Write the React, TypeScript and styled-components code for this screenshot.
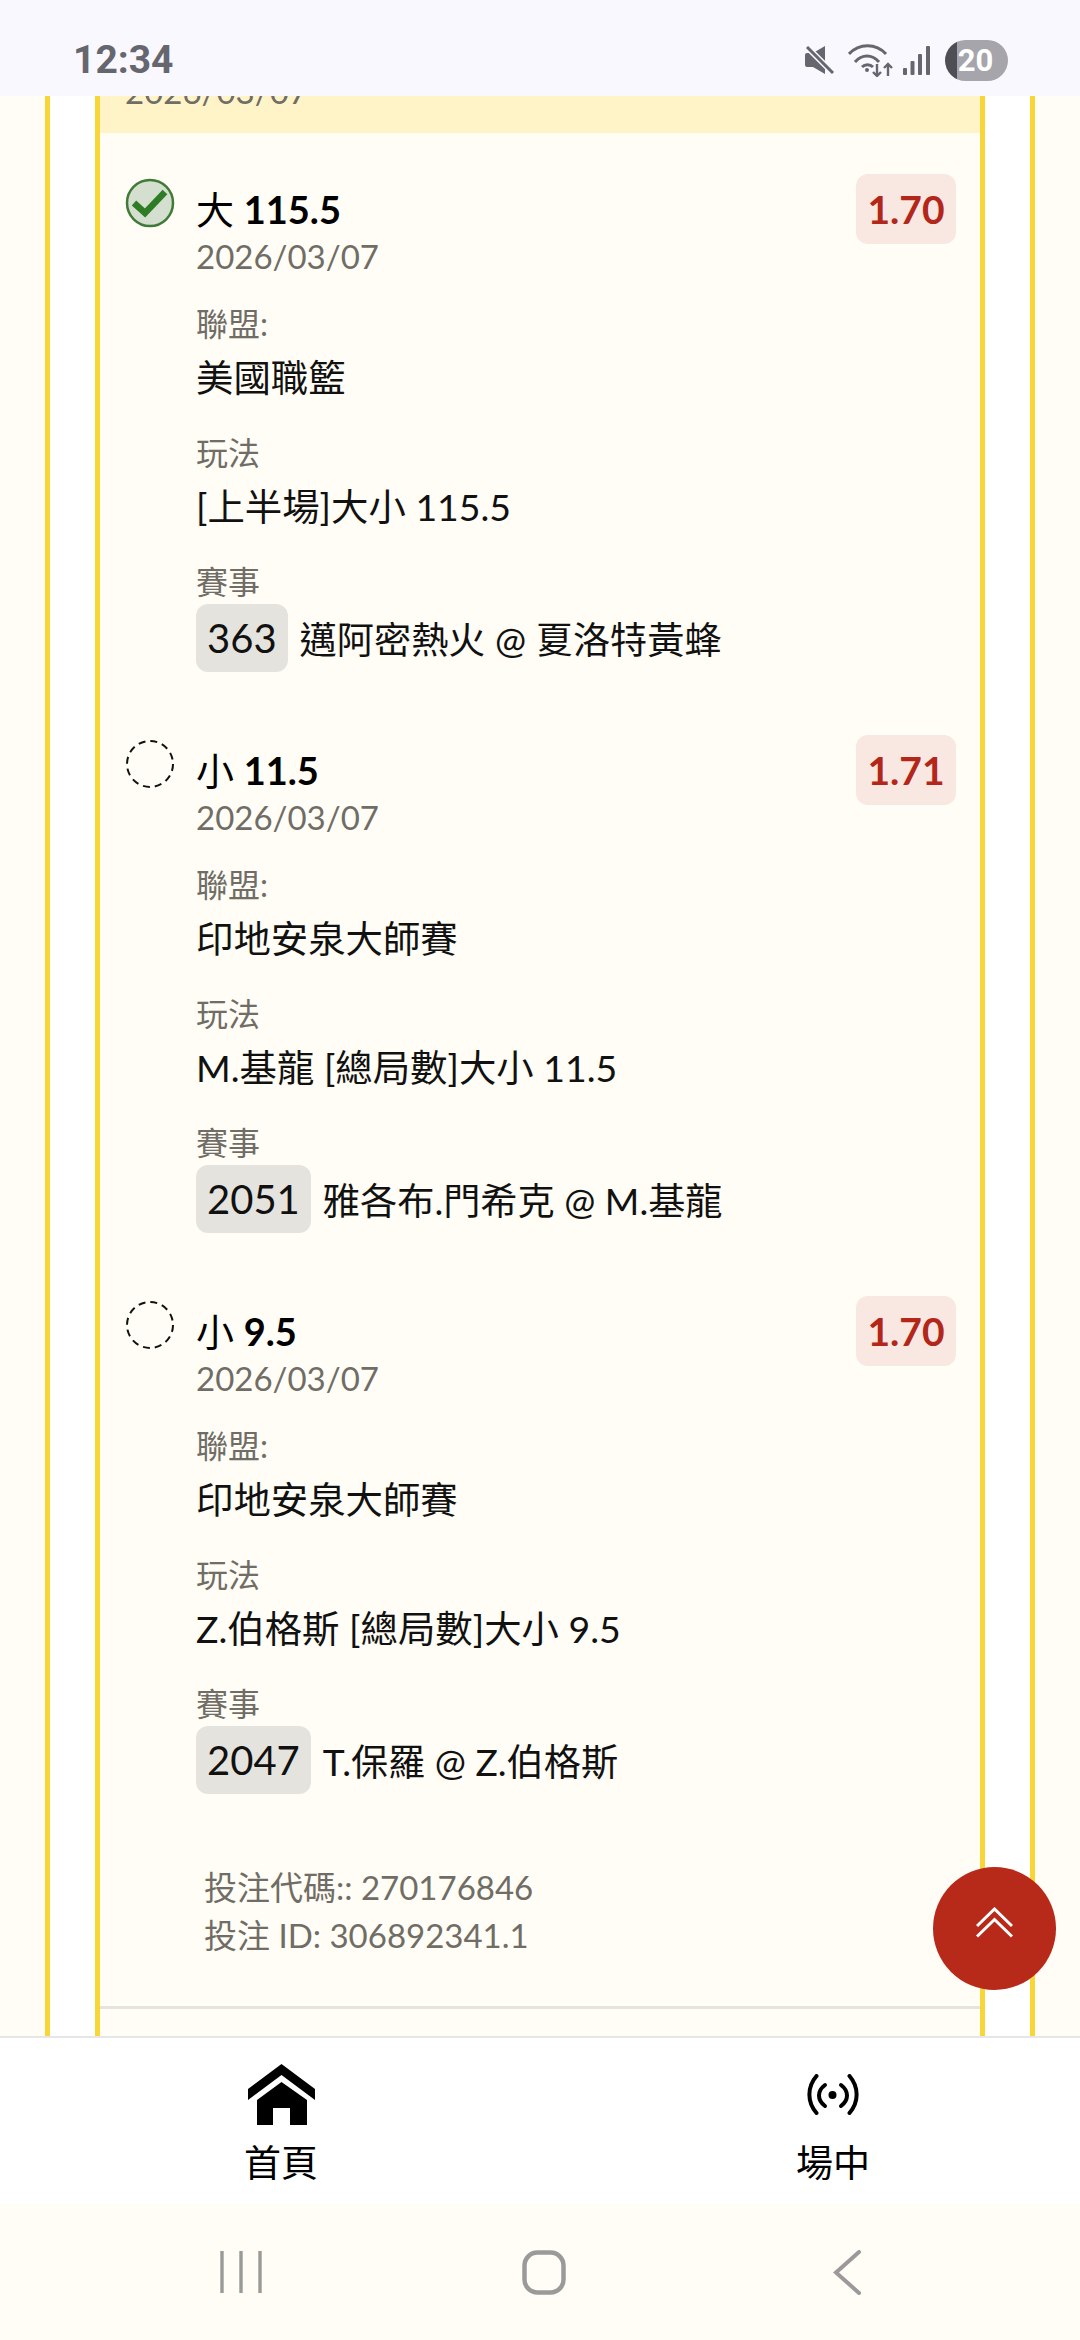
import React from "react";
import styled, { createGlobalStyle } from "styled-components";

const GlobalStyle = createGlobalStyle`
  html, body {
    margin: 0;
    padding: 0;
    background: #fffdf5;
    font-family: Lato, "Noto Sans CJK TC", sans-serif;
  }
  * {
    box-sizing: border-box;
  }
`;

const Screen = styled.div`
  width: 1080px;
  height: 2340px;
  display: flex;
  flex-direction: column;
  position: relative;
  overflow: hidden;
  background: #fffdf5;
`;

const StatusBar = styled.div`
  height: 96px;
  flex: none;
  background: #f8f8fe;
  display: flex;
  align-items: center;
  justify-content: space-between;
  padding: 24px 72px 0 73px;
  position: relative;
  z-index: 2;
`;

const Clock = styled.span`
  font-family: Roboto, sans-serif;
  font-size: 39px;
  font-weight: 700;
  color: #66666e;
`;

const StatusIcons = styled.div`
  display: flex;
  align-items: center;
  gap: 10px;
`;

const Battery = styled.div`
  width: 63px;
  height: 41px;
  border-radius: 21px;
  background: linear-gradient(90deg, #4e4e54 0 12px, #a5a5ab 12px);
  color: #fff;
  font-family: Roboto, sans-serif;
  font-size: 31px;
  font-weight: 700;
  display: flex;
  align-items: center;
  justify-content: center;
  padding-right: 2px;
`;

const ScrollArea = styled.div`
  flex: 1;
  min-height: 0;
  overflow: hidden;
  padding: 0 45px;
`;

const OuterFrame = styled.div`
  height: 100%;
  background: #fff;
  border-left: 5px solid #f8d637;
  border-right: 5px solid #f8d637;
  padding: 0 45px;
`;

const Card = styled.div`
  height: 100%;
  background: #fffdf5;
  border-left: 5px solid #f8d637;
  border-right: 5px solid #f8d637;
`;

const CardHeader = styled.div`
  height: 37px;
  background: #fff3c8;
  padding-left: 25px;
  overflow: hidden;
`;

const ClippedDate = styled.div`
  font-size: 33px;
  line-height: 40px;
  color: #6f6d66;
  margin-top: -25px;
`;

const BetList = styled.div`
  padding: 41px 24px 0 25px;
  display: flex;
  flex-direction: column;
  gap: 26px;
`;

const Bet = styled.div`
  display: grid;
  grid-template-columns: 71px 1fr auto;
  align-items: start;
  height: 535px;
`;

const Marker = styled.div`
  width: 50px;
  height: 50px;
  margin-top: 4px;
`;

const BetBody = styled.div`
  display: flex;
  flex-direction: column;
`;

const BetTitle = styled.div`
  font-size: 38px;
  line-height: 48px;
  margin-top: 11px;
  color: #000;

  strong {
    font-weight: 700;
  }
`;

const BetDate = styled.div`
  font-size: 33px;
  line-height: 42px;
  color: #6f6d66;
  margin: 2px 0 -2px;
`;

const Field = styled.div`
  display: flex;
  flex-direction: column;
  margin-top: 29px;
`;

const FieldLabel = styled.div`
  font-size: 32px;
  line-height: 40px;
  color: #6f6d66;
`;

const FieldValue = styled.div`
  font-size: 37.4px;
  line-height: 52px;
  color: #111;
  margin-top: 8px;
`;

const MatchRow = styled.div`
  display: flex;
  align-items: center;
  gap: 12px;
  font-size: 37.2px;
  color: #111;
  margin-top: 2px;
`;

const MatchCode = styled.span`
  background: #e5e3de;
  border-radius: 12px;
  height: 68px;
  padding: 0 11px;
  display: flex;
  align-items: center;
  font-size: 40px;
`;

const Odds = styled.div`
  width: 100px;
  height: 70px;
  border-radius: 12px;
  background: #f8e8e1;
  color: #b3261a;
  font-size: 39px;
  font-weight: 700;
  display: flex;
  align-items: center;
  justify-content: center;
`;

const Footnote = styled.div`
  padding: 32px 0 0 104px;
  font-size: 33px;
  line-height: 48px;
  color: #6f6d66;
`;

const Divider = styled.div`
  height: 3px;
  background: #e6e4de;
  margin-top: 47px;
`;

const TopButton = styled.button`
  position: absolute;
  left: 933px;
  top: 1867px;
  width: 123px;
  height: 123px;
  border: none;
  border-radius: 50%;
  background: #b72a1a;
  display: flex;
  align-items: center;
  justify-content: center;
  padding: 0 0 13px;
  z-index: 3;
`;

const BottomNav = styled.nav`
  flex: none;
  height: 168px;
  background: #fff;
  border-top: 2px solid #e6e6e6;
  display: flex;
  justify-content: space-between;
  padding: 0 197px 0 231px;
`;

const NavItem = styled.div`
  width: 100px;
  display: flex;
  flex-direction: column;
  align-items: center;
  color: #000;
  font-size: 37px;
  line-height: 44px;
  padding-top: 26px;
  gap: 16px;
`;

const NavIcon = styled.div`
  height: 61px;
  display: flex;
  align-items: center;
  justify-content: center;
`;

const SystemNav = styled.div`
  flex: none;
  height: 136px;
  background: #fffdf5;
  display: grid;
  grid-template-columns: repeat(3, 303px);
  justify-content: center;
  padding-left: 8px;
`;

const SystemKey = styled.div`
  display: flex;
  align-items: center;
  justify-content: center;
`;

const bets = [
  {
    side: "大",
    line: "115.5",
    odds: "1.70",
    league: "美國職籃",
    market: "[上半場]大小 115.5",
    code: "363",
    match: "邁阿密熱火 @ 夏洛特黃蜂",
    won: true,
  },
  {
    side: "小",
    line: "11.5",
    odds: "1.71",
    league: "印地安泉大師賽",
    market: "M.基龍 [總局數]大小 11.5",
    code: "2051",
    match: "雅各布.門希克 @ M.基龍",
    won: false,
  },
  {
    side: "小",
    line: "9.5",
    odds: "1.70",
    league: "印地安泉大師賽",
    market: "Z.伯格斯 [總局數]大小 9.5",
    code: "2047",
    match: "T.保羅 @ Z.伯格斯",
    won: false,
  },
];

function CheckMarker() {
  return (
    <svg width="50" height="50" viewBox="0 0 50 50">
      <circle cx="25" cy="25" r="23" fill="#d5dfd0" stroke="#3f7a37" strokeWidth="2.5" />
      <path d="M9 25l11 10 20-21" fill="none" stroke="#2e7d25" strokeWidth="6.5" />
    </svg>
  );
}

function PendingMarker() {
  return (
    <svg width="50" height="50" viewBox="0 0 50 50">
      <circle cx="25" cy="25" r="23" fill="none" stroke="#111" strokeWidth="2" strokeDasharray="7 5" />
    </svg>
  );
}

export default function App() {
  return (
    <Screen>
      <GlobalStyle />
      <StatusBar>
        <Clock>12:34</Clock>
        <StatusIcons>
          <svg width="33" height="28" viewBox="0 0 33 28">
            <path d="M0 9q0-2 2-2h6L20 0v28L8 21H2q-2 0-2-2z" fill="#66666e" />
            <path d="M1 0l28 28" stroke="#f8f8fe" strokeWidth="6" />
            <path d="M2 1l26 26" stroke="#66666e" strokeWidth="3" />
          </svg>
          <svg width="45" height="33" viewBox="0 0 45 33" fill="none" stroke="#66666e" strokeWidth="3">
            <path d="M1 10c10-11 27-11 37 0" />
            <path d="M7 18c7-8 17-8 24 0" />
            <path d="M14 23c3-3 8-3 11 0" />
            <circle cx="19" cy="26" r="2" fill="#66666e" stroke="none" />
            <path d="M29 20v12M25 28l4 4 4-4M40 32V20M36 24l4-4 4 4" strokeWidth="2.4" />
          </svg>
          <svg width="32" height="30" viewBox="0 0 32 30" fill="#66666e">
            <rect x="0" y="23" width="4" height="7" rx="1" />
            <rect x="7.5" y="16" width="4" height="14" rx="1" />
            <rect x="15" y="9" width="4" height="21" rx="1" />
            <rect x="23" y="1" width="4" height="29" rx="1" />
          </svg>
          <Battery>20</Battery>
        </StatusIcons>
      </StatusBar>
      <ScrollArea>
        <OuterFrame>
          <Card>
            <CardHeader>
              <ClippedDate>2026/03/07</ClippedDate>
            </CardHeader>
            <BetList>
              {bets.map((bet) => (
                <Bet key={bet.code}>
                  <Marker>{bet.won ? <CheckMarker /> : <PendingMarker />}</Marker>
                  <BetBody>
                    <BetTitle>
                      {bet.side} <strong>{bet.line}</strong>
                    </BetTitle>
                    <BetDate>2026/03/07</BetDate>
                    <Field>
                      <FieldLabel>聯盟:</FieldLabel>
                      <FieldValue>{bet.league}</FieldValue>
                    </Field>
                    <Field>
                      <FieldLabel>玩法</FieldLabel>
                      <FieldValue>{bet.market}</FieldValue>
                    </Field>
                    <Field>
                      <FieldLabel>賽事</FieldLabel>
                      <MatchRow>
                        <MatchCode>{bet.code}</MatchCode>
                        {bet.match}
                      </MatchRow>
                    </Field>
                  </BetBody>
                  <Odds>{bet.odds}</Odds>
                </Bet>
              ))}
            </BetList>
            <Footnote>
              <div>投注代碼:: 270176846</div>
              <div>投注 ID: 306892341.1</div>
            </Footnote>
            <Divider />
          </Card>
        </OuterFrame>
      </ScrollArea>
      <TopButton aria-label="top">
        <svg width="37" height="31" viewBox="0 0 37 31" fill="none" stroke="#fff" strokeWidth="3">
          <path d="M1 19L18.5 2 36 19" />
          <path d="M1 29.5L18.5 12.5 36 29.5" />
        </svg>
      </TopButton>
      <BottomNav>
        <NavItem>
          <NavIcon>
            <svg width="67" height="61" viewBox="0 0 67 61" fill="#000">
              <path d="M33.5 0L67 25v11L33.5 11 0 36V25z" />
              <path d="M33.5 18L59 36v25H42V44H25v17H9V36z" />
            </svg>
          </NavIcon>
          首頁
        </NavItem>
        <NavItem>
          <NavIcon>
            <svg width="52" height="41" viewBox="0 0 52 41" fill="none" stroke="#000" strokeWidth="4" strokeLinecap="round">
              <path d="M9.5 2C0 13 0 28 9.5 39" />
              <path d="M18 11c-8 6-8 15 0 21" />
              <path d="M42.5 2C52 13 52 28 42.5 39" />
              <path d="M34 11c8 6 8 15 0 21" />
              <circle cx="25.5" cy="21" r="4" fill="#000" stroke="none" />
            </svg>
          </NavIcon>
          場中
        </NavItem>
      </BottomNav>
      <SystemNav>
        <SystemKey>
          <svg width="42" height="42" viewBox="0 0 42 42" stroke="#9a9a9a" strokeWidth="3.4">
            <path d="M2 0v42M21 0v42M40 0v42" />
          </svg>
        </SystemKey>
        <SystemKey>
          <svg width="44" height="45" viewBox="0 0 44 45" fill="none" stroke="#9a9a9a" strokeWidth="4.5">
            <rect x="2.5" y="2.5" width="39" height="40" rx="13" />
          </svg>
        </SystemKey>
        <SystemKey>
          <svg width="28" height="45" viewBox="0 0 28 45" fill="none" stroke="#9a9a9a" strokeWidth="4" strokeLinecap="round">
            <path d="M26 2L3 22.5 26 43" />
          </svg>
        </SystemKey>
      </SystemNav>
    </Screen>
  );
}
